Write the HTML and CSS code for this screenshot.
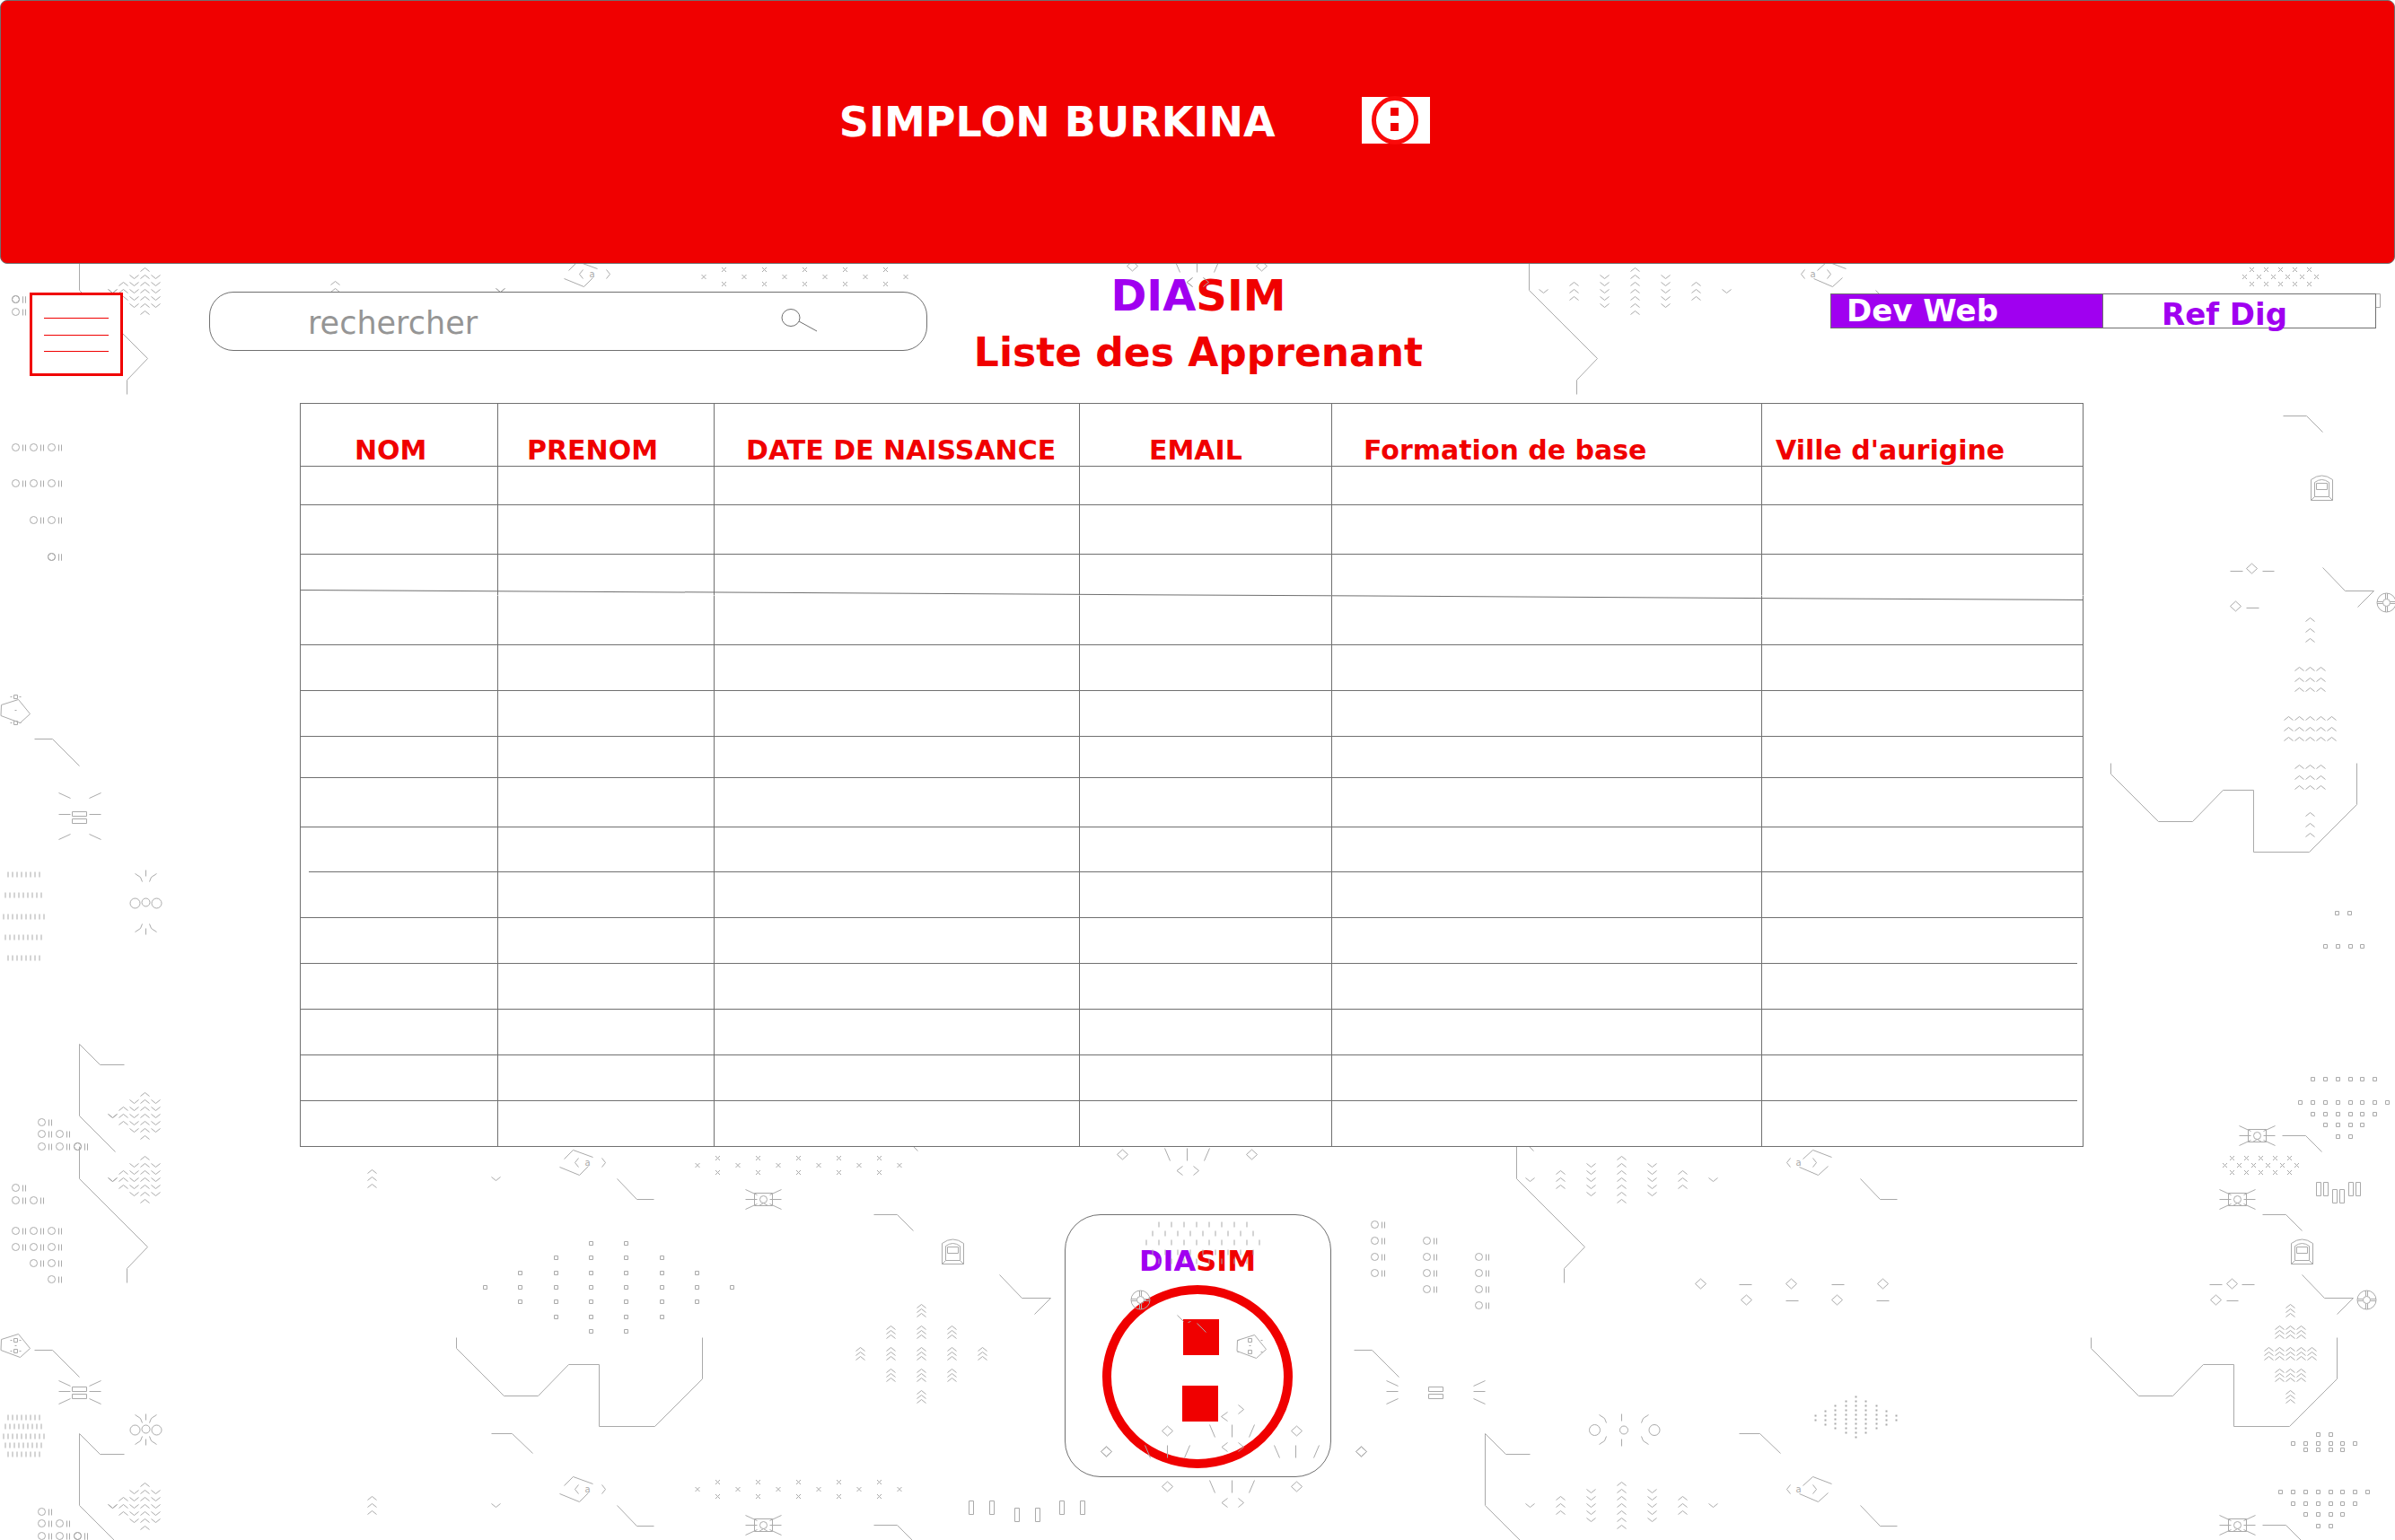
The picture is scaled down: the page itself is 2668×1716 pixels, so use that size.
FILE: index.html
```html
<!DOCTYPE html>
<html lang="fr">
<head>
<meta charset="utf-8">
<title>DIASIM - Liste des Apprenant</title>
<link rel="stylesheet" href="styles.css">
</head>
<body>
<svg class="deco deco-back" viewBox="-0.5 -0.5 2668 1716" aria-hidden="true">
  <defs>
    <marker id="up" markerUnits="userSpaceOnUse" markerWidth="12" markerHeight="8" overflow="visible"><path d="M-5 4L0 0L5 4"/></marker>
    <marker id="dn" markerUnits="userSpaceOnUse" markerWidth="12" markerHeight="8" overflow="visible"><path d="M-5 0L0 4L5 0"/></marker>
    <marker id="ob" markerUnits="userSpaceOnUse" markerWidth="20" markerHeight="10" overflow="visible"><path d="M-4 0a4 4 0 1 0 8 0a4 4 0 1 0 -8 0M8 -3v7M11 -3v7"/></marker>
    <marker id="cross" markerUnits="userSpaceOnUse" markerWidth="8" markerHeight="8" overflow="visible"><path d="M-2.500 -2.500l5 5M-2.500 2.500l5 -5"/></marker>
    <marker id="sq" markerUnits="userSpaceOnUse" markerWidth="8" markerHeight="8" overflow="visible"><path d="M-2 -2h4v4h-4z"/></marker>
    <marker id="dia" markerUnits="userSpaceOnUse" markerWidth="14" markerHeight="14" overflow="visible"><path d="M-6 0L0 -5.500L6 0L0 5.500z"/></marker>

    <g id="chevrons-left">
      <path class="m-up" d="M0 0v8v8v8v8v8v8M-24 16v8v8"/>
      <path class="m-dn" d="M-12 8v8v8v8v8M12 8v8v8v8v8M-36 24h0"/>
    </g>
    <g id="chevrons-wide">
      <path class="m-up" d="M0 0v8v8v8v8v8v8M-68 16v8v8M68 16v8v8"/>
      <path class="m-dn" d="M-34 8v8v8v8v8M34 8v8v8v8v8M-102 24h204"/>
    </g>
    <path id="hook" d="M0 -36V0L76 76L53 100V116"/>
    <path id="flag" d="M40 120L0 80V0L23 23H50"/>
    <path id="step" d="M0 0H20L50 30"/>
    <path id="bolt" d="M0 0L25 26H57L39 44"/>
    <path id="slope" d="M0 0H26L44 18"/>
    <path id="ramp" d="M0 0L22 23H41"/>
    <path id="fall" d="M0 0H23L46 22"/>
    <path id="trace" d="M0 0V12L53 65H91L125 30H159V99H221L274 46V0"/>
    <path id="crosses" class="m-cross" d="M0 0h45h45h45h45M-22.500 8h45h45h45h45h45M0 16h45h45h45h45"/>
    <path id="crosses-tight" class="m-cross" d="M0 0h16h16h16h16M-8 8h16h16h16h16h16M0 16h16h16h16h16"/>
    <g id="drone">
      <path d="M-10 -7H10V7H-10zM-20 -11L-7 -5M20 -11L7 -5M-20 0H-7M20 0H7M-20 11L-7 5M20 11L7 5M-5 7L0 4L5 7"/>
      <circle r="4"/>
    </g>
    <path id="car" d="M-12 28V5Q0 -4 12 5V28ZM-8 24V8Q0 2 8 8V24ZM-12 28L-8 24M12 28L8 24M-6 9H6V16H-6Z"/>
    <g id="wheel">
      <circle r="10.5"/><circle r="4"/>
      <path d="M-10.500 -1H-4M-10.500 1H-4M4 -1H10.500M4 1H10.500M-1 -10.500V-4M1 -10.500V-4M-1 4V10.500M1 4V10.500"/>
    </g>
    <g id="flare">
      <path class="m-dia" d="M-72 0H72"/>
      <path d="M-25 -7L-19 7M0 -7V7M25 -7L19 7"/>
      <path d="M-5 13L-11.500 18L-5 23M7 13L13 18L7 23"/>
    </g>
    <g id="code-left">
      <path d="M-17 -4L-7 -14L15 -6M10 4L0 14L-22 5M-1 -5L-5 0L-1 5M25 -5L29 0L25 5"/>
      <text x="9" y="3">a</text>
    </g>
    <g id="code-right">
      <path d="M-17 -4L-6 -14L15 -6M11 4L0 14L-21 5M-31 -5L-35 0L-31 5M-6 -5L-2 0L-6 5"/>
      <text x="-22" y="3">a</text>
    </g>
    <path id="ship" d="M1 -7L20 -13L33 3L22 13L0.500 5z"/>
    <path id="columns" d="M0 0h5v15h-5z"/>
  </defs>

  <use href="#chevrons-left" x="161" y="298"/>
  <use href="#chevrons-left" x="161" y="1217"/>
  <use href="#chevrons-left" x="161" y="1288"/>
  <use href="#chevrons-left" x="161" y="1652"/>
  <use href="#chevrons-wide" x="1821" y="298"/>
  <use href="#chevrons-wide" x="1806" y="1288"/>
  <use href="#chevrons-wide" x="1806" y="1651"/>
  <path class="m-up" d="M414 1303v8v8M414 1667v8v8M373 313v8"/>
  <path class="m-dn" d="M552 1311V1675M557 321h0"/>

  <use href="#hook" x="88" y="1313"/>
  <use href="#hook" x="88" y="323"/>
  <use href="#hook" x="1689" y="1313"/>
  <use href="#hook" x="1703" y="323"/>
  <use href="#flag" x="88" y="1163"/>
  <use href="#flag" x="88" y="1597"/>
  <use href="#flag" x="1654" y="1597"/>
  <use href="#step" x="38" y="823"/>
  <use href="#step" x="38" y="1504"/>
  <use href="#step" x="1508" y="1504"/>
  <use href="#bolt" x="2587" y="632"/>
  <use href="#bolt" x="2564" y="1420"/>
  <use href="#bolt" x="1113" y="1420"/>
  <use href="#slope" x="2543" y="463"/>
  <use href="#slope" x="2542" y="1265"/>
  <use href="#slope" x="2520" y="1353"/>
  <use href="#slope" x="2520" y="1699"/>
  <use href="#slope" x="973" y="1353"/>
  <use href="#slope" x="973" y="1699"/>
  <use href="#ramp" x="687" y="1313"/>
  <use href="#ramp" x="687" y="1677"/>
  <use href="#ramp" x="2072" y="1313"/>
  <use href="#ramp" x="2072" y="1677"/>
  <use href="#ramp" x="2089" y="323"/>
  <use href="#fall" x="547" y="1597"/>
  <use href="#fall" x="1937" y="1597"/>
  <path d="M1016 1276l6 6M1702 1276l6 6"/>
  <use href="#trace" x="2351" y="850"/>
  <use href="#trace" x="2329" y="1490"/>
  <use href="#trace" x="508" y="1490"/>

  <path class="m-ob" d="M17 333h0M17 347h20M17 498h20h20M17 538h20h20M37 579h20M57 620h0"/>
  <path class="m-ob" d="M46 1250v13v14M66 1263v14M86 1277h0M17 1323v14h20M17 1371h20h20M17 1389h20h20M37 1407h20v18M46 1684v13v14M66 1697v14M86 1711h0"/>
  <path class="m-ob" d="M1531 1364v18v18v18M1589 1382v18v18v18M1647 1400v18v18v18"/>

  <use href="#ship" y="792"/>
  <use href="#ship" y="1499"/>
  <path class="m-sq" d="M17 776v29M17 1493v12"/>
  <path d="M11 776h2M21 776h2M11 805h2M21 805h2M16 791h2M11 1493h2M21 1493h2M11 1505h2M21 1505h2M16 1499h2"/>

  <path d="M65 883l13 6M65 907h13M65 935l13 -6M112 883l-13 6M112 907h-13M112 935l-13 -6M80 904h16v5h-16zM80 912h16v5h-16z"/>
  <path d="M65 1538l13 6M65 1550h13M65 1564l13 -6M112 1538l-13 6M112 1550h-13M112 1564l-13 -6M80 1545h16v5h-16zM80 1553h16v5h-16z"/>
  <path d="M1544 1538l13 6M1544 1550h13M1544 1564l13 -6M1654 1538l-13 6M1654 1550h-13M1654 1564l-13 -6M1591 1545h16v5h-16zM1591 1553h16v5h-16z"/>

  <path class="ticks" d="M8 974h36M5 997h41M3 1021h46M5 1044h41M8 1067h36M8 1579h36M5 1589h41M3 1600h46M5 1610h41M8 1620h36"/>

  <g>
    <circle cx="150" cy="1006" r="5.5"/><circle cx="162" cy="1005" r="4.5"/><circle cx="174" cy="1006" r="5.5"/>
    <path d="M150 973l6 4l2 5M174 973l-6 4l-2 5M162 969v7M150 1038l6 -4l2 -5M174 1038l-6 -4l-2 -5M162 1034v7"/>
    <circle cx="150" cy="1593" r="5.5"/><circle cx="162" cy="1592" r="4.5"/><circle cx="174" cy="1593" r="5.5"/>
    <path d="M150 1576l6 4l2 5M174 1576l-6 4l-2 5M162 1575v7M150 1609l6 -4l2 -5M174 1609l-6 -4l-2 -5M162 1603v7"/>
    <circle cx="1776" cy="1593" r="6"/><circle cx="1808.5" cy="1593" r="4.5"/><circle cx="1842.5" cy="1593" r="6"/>
    <path d="M1781 1576l6 4l2 5M1836 1576l-6 4l-2 5M1806 1575v8M1781 1609l6 -4l2 -5M1836 1609l-6 -4l-2 -5M1806 1603v8"/>
  </g>

  <use href="#code-left" x="650" y="305"/>
  <use href="#code-left" x="645" y="1295"/>
  <use href="#code-left" x="645" y="1659"/>
  <use href="#code-right" x="2041" y="305"/>
  <use href="#code-right" x="2025" y="1295"/>
  <use href="#code-right" x="2025" y="1659"/>
  <use href="#crosses" x="806" y="300"/>
  <use href="#crosses" x="799" y="1290"/>
  <use href="#crosses" x="799" y="1651"/>
  <use href="#crosses-tight" x="2508" y="300"/>
  <use href="#crosses-tight" x="2486" y="1290"/>
  <use href="#drone" x="850" y="1336"/>
  <use href="#drone" x="850" y="1699"/>
  <use href="#drone" x="2514" y="1265"/>
  <use href="#drone" x="2492" y="1336"/>
  <use href="#drone" x="2492" y="1699"/>
  <use href="#columns" x="2580" y="1317"/>
  <use href="#columns" x="2588" y="1317"/>
  <use href="#columns" x="2598" y="1325"/>
  <use href="#columns" x="2606" y="1325"/>
  <use href="#columns" x="2616" y="1317"/>
  <use href="#columns" x="2624" y="1317"/>
  <use href="#columns" x="1079" y="1672"/>
  <use href="#columns" x="1102" y="1672"/>
  <use href="#columns" x="1130" y="1680"/>
  <use href="#columns" x="1153" y="1680"/>
  <use href="#columns" x="1180" y="1672"/>
  <use href="#columns" x="1203" y="1672"/>
  <use href="#columns" x="2646" y="327"/>
  <use href="#car" x="2586" y="529"/>
  <use href="#car" x="2564" y="1380"/>
  <use href="#car" x="1061" y="1380"/>
  <use href="#wheel" x="2658" y="671"/>
  <use href="#wheel" x="2636" y="1448"/>

  <path class="m-dia" d="M2508 633L2490 675M2486 1430L2468 1448M1894 1430L1945 1448L1995 1430L2046 1448L2097 1430"/>
  <path d="M2484 636h14M2520 636h13M2502 677h14M2461 1431h14M2497 1431h14M2480 1449h13M1937 1431h14M2040 1431h14M1989 1449h14M2090 1449h14"/>
  <use href="#flare" x="1333" y="296"/>
  <use href="#flare" x="1322" y="1286"/>
  <use href="#flare" x="1372" y="1656"/>
  <path class="m-dia" d="M1516 1617h0"/>

  <path class="m-up" d="M1026 1453v5v5M1026 1477v5v5M992 1477v5v5M1060 1477v5v5M1026 1501v5v5M992 1501v5v5M1060 1501v5v5M958 1501v5v5M1094 1501v5v5M1026 1525v5v5M992 1525v5v5M1060 1525v5v5M1026 1549v5v5"/>
  <path class="m-up" d="M2551 1453v5v5M2551 1477v5v5M2539 1477v5v5M2563 1477v5v5M2551 1501v5v5M2539 1501v5v5M2563 1501v5v5M2527 1501v5v5M2575 1501v5v5M2551 1525v5v5M2539 1525v5v5M2563 1525v5v5M2551 1549v5v5"/>
  <path class="m-up" d="M2573 688v12v11M2573 743v12v11M2561 743v12v11M2585 743v12v11M2573 798v12v11M2561 798v12v11M2585 798v12v11M2549 798v12v11M2597 798v12v11M2573 852v12v11M2561 852v12v11M2585 852v12v11M2573 905v12v11"/>

  <path class="m-sq" d="M658 1385h39M619 1401h39h39h40M579 1418h40h39h39h40h39M540 1434h39h40h39h39h40h39h39M579 1450h40h39h39h40h39M619 1467h39h39h40M658 1483h39"/>
  <path class="m-sq" d="M2603 1017h14M2590 1054h14h14h13M2576 1202h14h14h14h13h14M2562 1228h14h14h14h14h13h14h14M2576 1241h14h14h14h13h14M2590 1253h14h14h13M2604 1266h14"/>
  <path class="m-sq" d="M2582 1598h14M2554 1608h14h14h14h13h14M2568 1615h14h14h13M2540 1662h14h14h14h14h13h14h14M2554 1675h14h14h14h13h14M2568 1687h14h14h13M2582 1700h14"/>
  <path class="dots" d="M2022 1576v8M2033 1571v18M2044 1565v28M2056 1560v39M2067 1555v49M2078 1560v39M2090 1565v28M2101 1571v18M2112 1576v8"/>
</svg>

<header class="banner">
  <h1 class="banner-title">SIMPLON BURKINA</h1>
  <svg class="banner-logo" viewBox="0 0 76 54" aria-hidden="true">
    <rect y="1" width="76" height="52" fill="#fff"/>
    <ellipse cx="37" cy="27" rx="23.5" ry="24.5" fill="none" stroke="#fa0a0a" stroke-width="5"/>
    <path d="M32 13h9v9h-9zM32 30h9v9h-9z" fill="#f00000"/>
  </svg>
</header>

<div class="toolbar">
  <button class="menu" type="button" aria-label="Menu"><span></span><span></span><span></span></button>
  <form class="search">
    <input type="search" aria-label="rechercher" placeholder="rechercher">
    <svg viewBox="0 0 42 28" aria-hidden="true"><ellipse cx="12" cy="12" rx="10" ry="9.500"/><path d="M21 16L41 27"/></svg>
  </form>
  <div class="titles">
    <p class="brand">DIA<span>SIM</span></p>
    <h2>Liste des Apprenant</h2>
  </div>
  <nav class="tabs">
    <button class="tab tab-active" type="button">Dev Web</button>
    <button class="tab" type="button">Ref Dig</button>
  </nav>
</div>

<main>
  <div class="sheet">
    <table>
      <colgroup><col class="c1"><col class="c2"><col class="c3"><col class="c4"><col class="c5"><col></colgroup>
      <thead>
        <tr><th>NOM</th><th>PRENOM</th><th>DATE DE NAISSANCE</th><th>EMAIL</th><th>Formation de base</th><th>Ville d'aurigine</th></tr>
      </thead>
      <tbody>
        <tr class="short"><td></td><td></td><td></td><td></td><td></td><td></td></tr>
        <tr class="tall"><td></td><td></td><td></td><td></td><td></td><td></td></tr>
        <tr class="low open"><td></td><td></td><td></td><td></td><td></td><td></td></tr>
        <tr class="tall"><td></td><td></td><td></td><td></td><td></td><td></td></tr>
        <tr><td></td><td></td><td></td><td></td><td></td><td></td></tr>
        <tr><td></td><td></td><td></td><td></td><td></td><td></td></tr>
        <tr class="low"><td></td><td></td><td></td><td></td><td></td><td></td></tr>
        <tr class="tall"><td></td><td></td><td></td><td></td><td></td><td></td></tr>
        <tr class="cut-start"><td></td><td></td><td></td><td></td><td></td><td></td></tr>
        <tr><td></td><td></td><td></td><td></td><td></td><td></td></tr>
        <tr class="cut-end"><td></td><td></td><td></td><td></td><td></td><td></td></tr>
        <tr><td></td><td></td><td></td><td></td><td></td><td></td></tr>
        <tr><td></td><td></td><td></td><td></td><td></td><td></td></tr>
        <tr class="cut-end"><td></td><td></td><td></td><td></td><td></td><td></td></tr>
        <tr><td></td><td></td><td></td><td></td><td></td><td></td></tr>
      </tbody>
    </table>
    <svg class="slant" viewBox="0 0 1986 12" preserveAspectRatio="none" aria-hidden="true"><path d="M0 0.500L1986 11.500"/></svg>
  </div>

  <section class="card">
    <p class="brand brand-small">DIA<span>SIM</span></p>
    <svg class="emblem" viewBox="0 0 212 204" aria-hidden="true">
      <ellipse cx="106" cy="102" rx="101" ry="97" fill="none" stroke="#f00000" stroke-width="10"/>
      <path d="M90 38h40v40h-40zM89 112h40v40h-40z" fill="#f00000"/>
    </svg>
  </section>
</main>

<svg class="deco deco-front" viewBox="-0.5 -0.5 2668 1716" aria-hidden="true">
  <path d="M1328 309L1322 314L1328 319M1340 309L1346 314L1340 319"/>
  <path class="ticks-wide" d="M1290 1364h100M1283 1374h114M1276 1384h128M1283 1395h114M1290 1405h100"/>
  <use href="#wheel" x="1270" y="1448"/>
  <path d="M1311 1465l7 7M1333 1474l10 10M1323 1473l3 -1"/>
  <use href="#ship" x="1377" y="1500"/>
  <path class="m-sq" d="M1392 1493v13"/>
  <path d="M1378 1493h2M1404 1493h2M1378 1506h2M1404 1506h2M1391 1499h2"/>
  <path d="M1367 1573L1360 1578L1367 1583M1379 1565L1385 1570L1379 1575"/>
  <use href="#flare" x="1372" y="1594"/>
  <path class="m-dia" d="M1232 1617h0"/>
  <path d="M1275 1610l6 14M1300 1610v14M1325 1610l-6 14M1419 1610l6 14M1443 1610v14M1469 1610l-6 14"/>
</svg>
</body>
</html>
```

FILE: styles.css
```css
* { box-sizing: border-box; }

body {
  position: relative;
  isolation: isolate;
  min-height: 100vh;
  margin: 0;
  overflow-x: hidden;
  background: #fff;
  color: #f00000;
  font-family: Verdana, "DejaVu Sans", sans-serif;
}

h1, h2, p { margin: 0; }
button, input { font: inherit; }

/* Circuit-like drawings behind and over the page */
.deco {
  position: absolute;
  top: 0;
  left: 0;
  width: 100%;
  fill: none;
  stroke: #aaa;
  stroke-width: 1;
  pointer-events: none;
}
.deco-back { z-index: -1; }
.deco-front { z-index: 1; }
.deco text {
  fill: #aaa;
  stroke: none;
  font-size: 10px;
  text-anchor: middle;
}
.m-up { stroke: none; marker: url(#up); }
.m-dn { stroke: none; marker: url(#dn); }
.m-ob { stroke: none; marker: url(#ob); }
.m-cross { stroke: none; marker: url(#cross); }
.m-sq { stroke: none; marker: url(#sq); }
.m-dia { stroke: none; marker: url(#dia); }
marker path { stroke: #aaa; }
.ticks { stroke-width: 6; stroke-dasharray: 1 4; }
.ticks-wide { stroke-width: 6; stroke-dasharray: 1 13; }
.dots { stroke-width: 2; stroke-dasharray: 2 3; }

/* Banner */
.banner {
  display: flex;
  align-items: center;
  gap: 92px;
  height: 294px;
  padding: 0 0 26px 35%;
  border: 1px solid #707070;
  border-radius: 8px;
  background: #f00000;
}
.banner-title {
  padding-top: 4px;
  color: #fff;
  font-size: 46px;
  line-height: 54px;
  white-space: nowrap;
}
.banner-logo { width: 76px; height: 54px; margin-left: 4px; }

/* Toolbar */
.toolbar {
  display: flex;
  align-items: flex-start;
  padding: 4px 21px 0 33px;
}
.menu {
  display: flex;
  flex: none;
  flex-direction: column;
  gap: 17px;
  width: 104px;
  height: 93px;
  margin: 28px 96px 0 0;
  padding: 24px 13px;
  border: 3px solid #f00000;
  background: #fff;
}
.menu span { height: 2px; margin-top: 1px; background: #f00000; }
.search {
  display: flex;
  flex: 0 1 800px;
  height: 66px;
  margin-top: 27px;
  padding: 0 121px 0 109px;
  border: 1px solid #707070;
  border-radius: 27px;
  background: #fff;
}
.search input {
  flex: 1;
  min-width: 0;
  padding: 4px 0 0;
  border: 0;
  outline: 0;
  background: none;
  color: #959595;
  font-size: 35px;
}
.search input::placeholder { color: #959595; opacity: 1; }
.search svg {
  width: 42px;
  height: 28px;
  margin-top: 16px;
  fill: none;
  stroke: #707070;
}
.titles {
  flex: 0 0 604px;
  font-size: 48px;
  line-height: 63px;
  text-align: center;
  white-space: nowrap;
}
.titles h2 { font-size: 44px; }
.brand { color: #a000f0; font-weight: bold; }
.brand span { color: #f00000; }
.tabs {
  display: flex;
  flex: 0 0 608px;
  margin: 29px 0 0 auto;
}
.tab {
  flex: none;
  width: 50%;
  height: 39px;
  padding: 4px 0 0 65px;
  border: 1px solid #707070;
  border-left: 0;
  background: #fff;
  color: #a000f0;
  font-size: 34px;
  font-weight: bold;
  line-height: 36px;
  text-align: left;
}
.tab-active {
  padding: 0 0 3px 17px;
  border-left: 1px solid #707070;
  background: #a000f0;
  color: #fff;
}

/* Table of learners */
.sheet {
  position: relative;
  margin: 25px 347px 0 334px;
}
table {
  width: 100%;
  border: 1px solid #707070;
  border-right: 0;
  border-bottom: 0;
  border-spacing: 0;
  table-layout: fixed;
  background: #fff;
}
.c1 { width: 220px; }
.c2 { width: 241px; }
.c3 { width: 407px; }
.c4 { width: 281px; }
.c5 { width: 479px; }
th, td {
  border: 1px solid #707070;
  border-width: 0 1px 1px 0;
}
th {
  height: 70px;
  padding: 36px 0 1px;
  font-size: 30px;
  line-height: 32px;
  text-align: left;
  white-space: nowrap;
}
th:nth-child(1) { padding-left: 60px; }
th:nth-child(2) { padding-left: 32px; }
th:nth-child(3) { padding-left: 35px; }
th:nth-child(4) { padding-left: 77px; }
th:nth-child(5) { padding-left: 35px; }
th:nth-child(6) { padding-left: 15px; }
td { height: 51px; padding: 0; }
.short td { height: 43px; }
.low td { height: 46px; }
.tall td { height: 55px; }
.open td { border-bottom-color: transparent; }
.cut-start td { height: 50px; }
.cut-start td:first-child,
.cut-end td:last-child {
  border-bottom: 0;
  background: linear-gradient(#707070, #707070) no-repeat right bottom / calc(100% - 9px) 1px;
}
.cut-end td:last-child {
  background-position: left bottom;
  background-size: calc(100% - 6px) 1px;
}
.slant {
  position: absolute;
  top: 208px;
  left: 0;
  width: 100%;
  height: 12px;
  fill: none;
  stroke: #707070;
}

/* Brand card */
.card {
  display: flex;
  flex-direction: column;
  align-items: center;
  width: 297px;
  margin: 75px auto 71px;
  padding: 31px 0 9px;
  border: 1px solid #707070;
  border-radius: 40px;
  background: #fff;
}
.brand-small { font-size: 32px; line-height: 40px; }
.emblem { width: 212px; height: 204px; margin-top: 7px; }
```
